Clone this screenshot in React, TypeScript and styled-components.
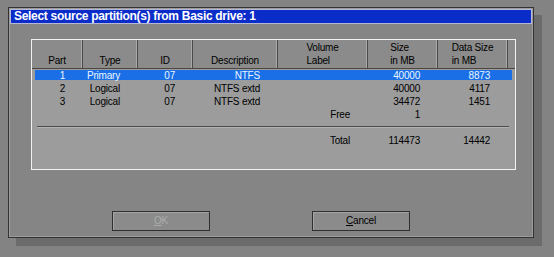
import type {FC, ReactNode} from 'react';
import styled, {createGlobalStyle} from 'styled-components';

type Row = {part: string; type: string; id: string; desc: string; label: string; size: string; data: string};

const rows: Row[] = [
    {part: '1', type: 'Primary', id: '07', desc: 'NTFS', label: '', size: '40000', data: '8873'},
    {part: '2', type: 'Logical', id: '07', desc: 'NTFS extd', label: '', size: '40000', data: '4117'},
    {part: '3', type: 'Logical', id: '07', desc: 'NTFS extd', label: '', size: '34472', data: '1451'},
    {part: '', type: '', id: '', desc: '', label: 'Free', size: '1', data: ''},
];

const headers: ReactNode[] = [
    'Part', 'Type', 'ID', 'Description',
    <>Volume<br/>Label</>,
    <>Size<br/>in MB</>,
    <>Data Size<br/>in MB</>,
];

const columns = '51px 55px 55px 85px 90px 70px 70px 1fr';

const GlobalStyle = createGlobalStyle`
    html, body {
        margin: 0;
        padding: 0;
    }
    body {
        width: 554px;
        height: 257px;
        overflow: hidden;
        background: #838383;
        font-family: "Liberation Sans", Arial, sans-serif;
    }
`;

const Screen = styled.div`
    padding: 7px 0 0 8px;
`;

const Window = styled.div`
    box-sizing: border-box;
    width: 526px;
    height: 231px;
    padding: 1px;
    display: flex;
    flex-direction: column;
    background: #858585;
    border: 1px solid #333;
    box-shadow: inset 1px 1px 0 #9c9c9c, inset -1px -1px 0 #9c9c9c, 8px 8px 0 #6b6b6b;
`;

const TitleBar = styled.div`
    box-sizing: border-box;
    height: 15px;
    padding-left: 3px;
    background: #0a2dc9;
    border: 1px solid #b6b8da;
    color: #fff;
    font-size: 12px;
    font-weight: bold;
    line-height: 13px;
    letter-spacing: -0.3px;
    white-space: nowrap;
`;

const Panel = styled.div`
    box-sizing: border-box;
    width: 485px;
    height: 131px;
    margin: 15px 0 0 21px;
    background: #9c9c9c;
    border: 1px solid #f2f2f2;
    font-size: 10px;
    letter-spacing: -0.2px;
`;

const Header = styled.div`
    display: grid;
    grid-template-columns: ${columns};
    height: 28px;
    background: #8b8b8b;
    border-bottom: 1px solid #4e453d;
`;

const HeadCell = styled.div<{$last?: boolean}>`
    display: flex;
    justify-content: center;
    align-items: flex-end;
    padding-bottom: 1px;
    border-right: ${p => p.$last ? 'none' : '1px solid #4a4a4a'};
    box-shadow: ${p => p.$last ? 'none' : 'inset -1px 0 0 #a9a9a9'};
`;

const HeadText = styled.span`
    display: inline-block;
    text-align: left;
    line-height: 13px;
    color: #000;
`;

const DataRow = styled.div<{$selected?: boolean}>`
    display: grid;
    grid-template-columns: ${columns};
    height: 13px;
    line-height: 13px;
    color: ${p => p.$selected ? '#eaf6ff' : '#000'};
    background: ${p => p.$selected
        ? 'linear-gradient(#1a6fe6, #1a6fe6) 3px 1px / calc(100% - 6px) 10px no-repeat'
        : 'none'};
`;

const Cell = styled.div`
    padding-right: 18px;
    text-align: right;
    white-space: nowrap;
`;

const Body = styled.div`
    padding-top: 0;
`;

const Divider = styled.div`
    height: 1px;
    margin: 5px 6px 0 5px;
    background: #4c4c4c;
    border-bottom: 1px solid #b2b2b2;
`;

const TotalRow = styled(DataRow)`
    margin-top: 6px;
`;

const ButtonRow = styled.div`
    display: flex;
    gap: 102px;
    margin: 41px 0 0 102px;
`;

const Button = styled.div<{$disabled?: boolean}>`
    box-sizing: border-box;
    width: 98px;
    height: 20px;
    background: #8b8b8b;
    border: 1px solid #2f2f2f;
    box-shadow: inset 1px 1px 0 #a4a4a4;
    color: ${p => p.$disabled ? '#acacac' : '#000'};
    font-size: 10px;
    line-height: 18px;
    text-align: center;
    letter-spacing: -0.2px;

    u {
        text-decoration: underline;
        text-underline-offset: 1px;
    }
`;

const Cells: FC<{row: Row}> = ({row}) => <>
    <Cell>{row.part}</Cell>
    <Cell>{row.type}</Cell>
    <Cell>{row.id}</Cell>
    <Cell>{row.desc}</Cell>
    <Cell>{row.label}</Cell>
    <Cell>{row.size}</Cell>
    <Cell>{row.data}</Cell>
    <div/>
</>;

export default function App() {
    return <>
        <GlobalStyle/>
        <Screen>
            <Window>
                <TitleBar>Select source partition(s) from Basic drive: 1</TitleBar>
                <Panel>
                    <Header>
                        {headers.map((h, i) => <HeadCell key={i}><HeadText>{h}</HeadText></HeadCell>)}
                        <HeadCell $last/>
                    </Header>
                    <Body>
                        {rows.map((r, i) => <DataRow key={i} $selected={i === 0}><Cells row={r}/></DataRow>)}
                    </Body>
                    <Divider/>
                    <TotalRow>
                        <Cells row={{part: '', type: '', id: '', desc: '', label: 'Total', size: '114473', data: '14442'}}/>
                    </TotalRow>
                </Panel>
                <ButtonRow>
                    <Button $disabled><u>O</u>K</Button>
                    <Button><u>C</u>ancel</Button>
                </ButtonRow>
            </Window>
        </Screen>
    </>;
}
